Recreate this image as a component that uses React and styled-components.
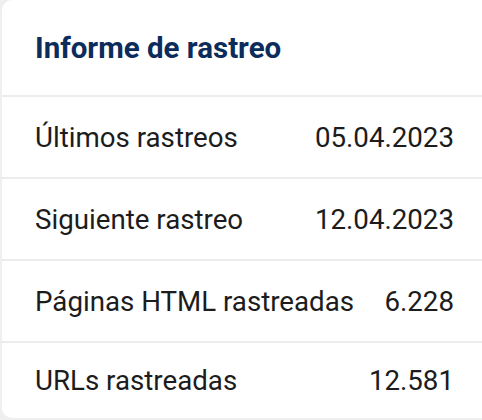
import React from 'react';
import styled, { createGlobalStyle } from 'styled-components';

const GlobalStyle = createGlobalStyle`
  body {
    margin: 0;
    background: #efefef;
    font-family: Roboto, 'Liberation Sans', sans-serif;
  }
`;

const Card = styled.section`
  margin-left: 2px;
  width: 490px;
  height: 418px;
  background: #ffffff;
  border-radius: 10px;
  overflow: hidden;
  display: flex;
  flex-direction: column;
`;

const Header = styled.h2`
  margin: 0;
  height: 95px;
  padding: 0 33px;
  display: flex;
  align-items: center;
  font-size: 29.5px;
  font-weight: 700;
  color: #0c2c5c;
`;

const Row = styled.div`
  height: ${(p) => (p.$last ? '75px' : '80px')};
  flex-shrink: 0;
  border-top: 2px solid #ececec;
  padding: 0 38px 0 33px;
  display: flex;
  align-items: center;
  justify-content: space-between;
  font-size: 27.7px;
  color: #1c1c1c;
`;

const Label = styled.span``;

const Value = styled.span`
  text-align: right;
`;

const rows = [
  ['Últimos rastreos', '05.04.2023'],
  ['Siguiente rastreo', '12.04.2023'],
  ['Páginas HTML rastreadas', '6.228'],
  ['URLs rastreadas', '12.581'],
];

const App = () => {
  return (
    <>
      <GlobalStyle />
      <Card>
        <Header>Informe de rastreo</Header>
        {rows.map(([label, value], i) => (
          <Row key={label} $last={i === rows.length - 1}>
            <Label>{label}</Label>
            <Value>{value}</Value>
          </Row>
        ))}
      </Card>
    </>
  );
};

export default App;
